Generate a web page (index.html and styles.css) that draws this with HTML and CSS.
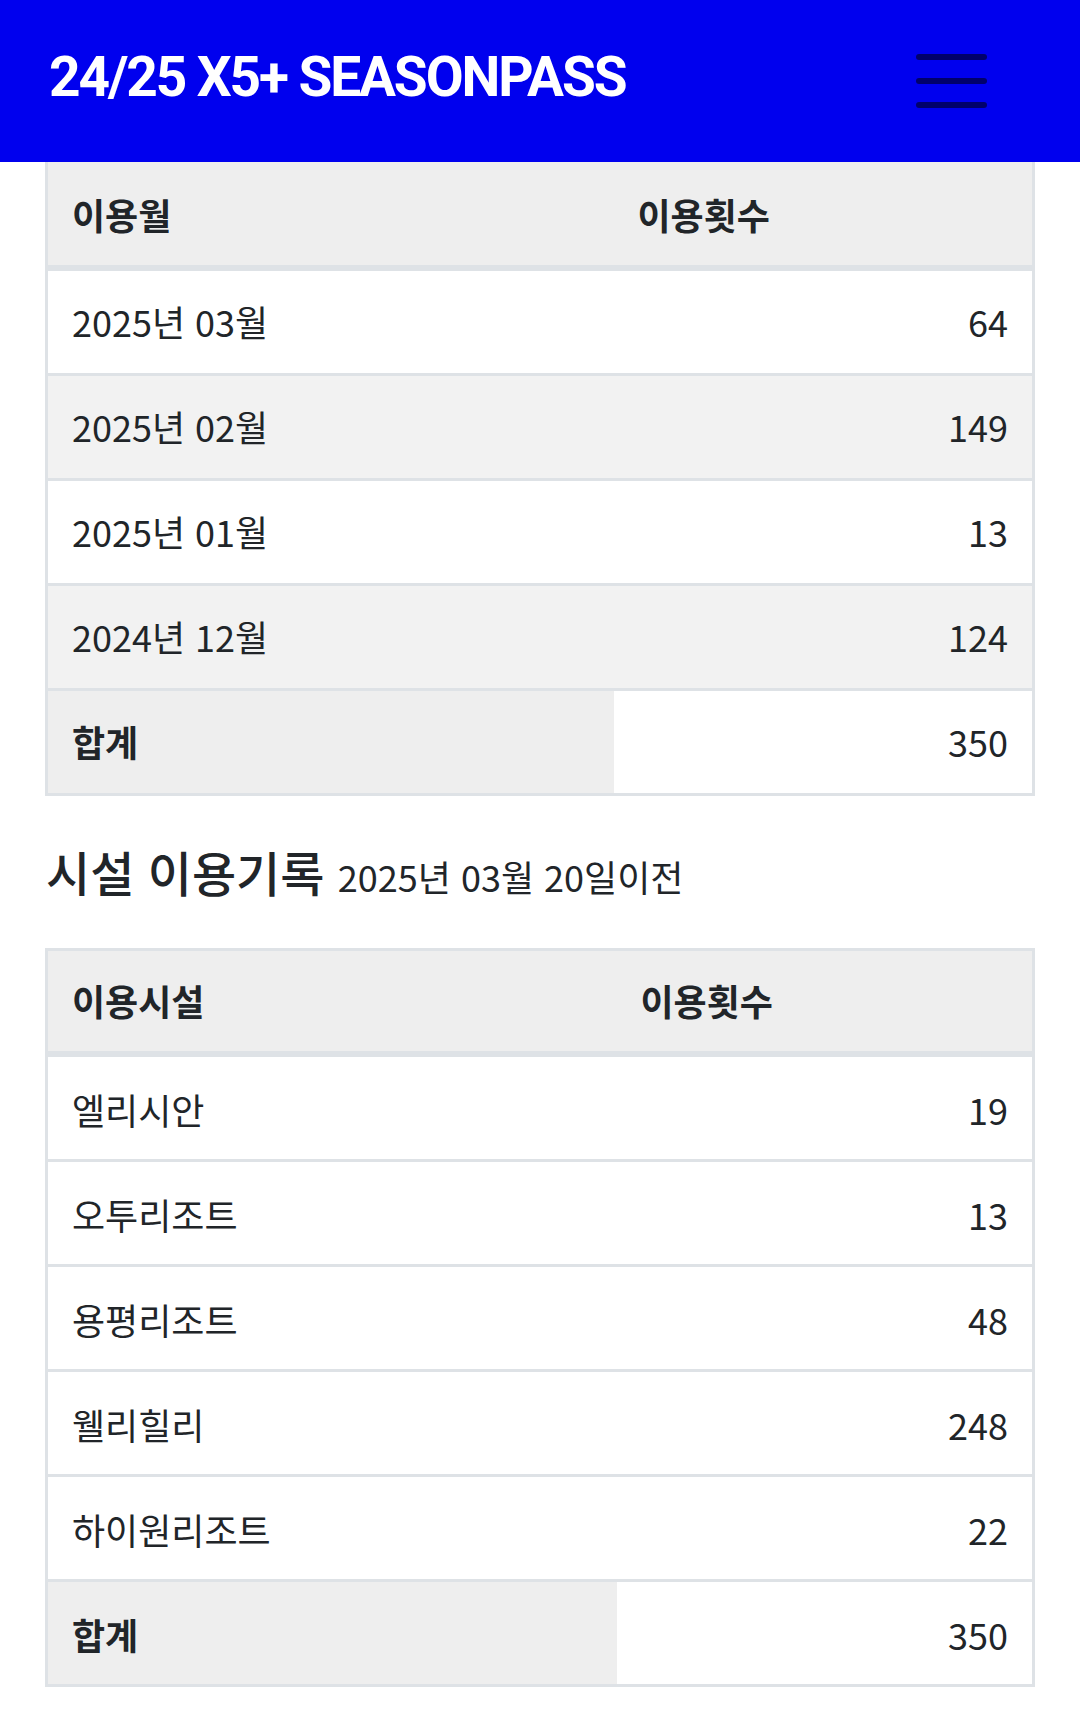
FILE: index.html
```html
<!DOCTYPE html>
<html lang="ko">
<head>
<meta charset="utf-8">
<title>24/25 X5+ SEASONPASS</title>
<link rel="stylesheet" href="styles.css">
</head>
<body>
<nav class="navbar">
  <span class="brand">24/25 X5+ SEASONPASS</span>
  <span class="toggler">
    <svg width="71" height="54" viewBox="0 0 71 54" aria-hidden="true">
      <g stroke="#00006b" stroke-width="6" stroke-linecap="round">
        <line x1="3" y1="3" x2="68" y2="3"/>
        <line x1="3" y1="27" x2="68" y2="27"/>
        <line x1="3" y1="51" x2="68" y2="51"/>
      </g>
    </svg>
  </span>
</nav>

<main class="content">
  <table class="usage first">
    <colgroup><col class="c1a"><col></colgroup>
    <thead>
      <tr><th>이용월</th><th>이용횟수</th></tr>
    </thead>
    <tbody>
      <tr><td>2025년 03월</td><td class="num">64</td></tr>
      <tr class="stripe"><td>2025년 02월</td><td class="num">149</td></tr>
      <tr><td>2025년 01월</td><td class="num">13</td></tr>
      <tr class="stripe"><td>2024년 12월</td><td class="num">124</td></tr>
      <tr class="total"><th>합계</th><td class="num">350</td></tr>
    </tbody>
  </table>

  <h2 class="section-title">시설 이용기록 <small>2025년 03월 20일이전</small></h2>

  <table class="usage second">
    <colgroup><col class="c1b"><col></colgroup>
    <thead>
      <tr><th>이용시설</th><th>이용횟수</th></tr>
    </thead>
    <tbody>
      <tr><td>엘리시안</td><td class="num">19</td></tr>
      <tr><td>오투리조트</td><td class="num">13</td></tr>
      <tr><td>용평리조트</td><td class="num">48</td></tr>
      <tr><td>웰리힐리</td><td class="num">248</td></tr>
      <tr><td>하이원리조트</td><td class="num">22</td></tr>
      <tr class="total"><th>합계</th><td class="num">350</td></tr>
    </tbody>
  </table>
</main>
</body>
</html>
```

FILE: styles.css
```css
html, body {
  margin: 0;
  padding: 0;
  background: #ffffff;
}

body {
  font-family: "Noto Sans CJK KR", "Noto Sans", sans-serif;
  color: #212529;
  font-size: 36px;
}

.navbar {
  height: 162px;
  background: #0000ee;
  display: flex;
  align-items: center;
  justify-content: space-between;
  padding: 0 93px 0 49px;
}

.brand {
  font-family: Roboto, "Liberation Sans", sans-serif;
  font-weight: 700;
  font-size: 55px;
  letter-spacing: -2.1px;
  color: #ffffff;
  margin-bottom: 8px;
  line-height: 1.172;
}

.toggler {
  display: flex;
}

.content {
  padding: 0 45px 40px;
}

.usage {
  width: 100%;
  border-collapse: collapse;
  table-layout: fixed;
  border-left: 3px solid #dee2e6;
  border-right: 3px solid #dee2e6;
}

.usage.second {
  border-top: 3px solid #dee2e6;
}

.c1a { width: 567px; }
.c1b { width: 570px; }

.usage th,
.usage td {
  padding: 25px 24px 27px;
  line-height: 50px;
  text-align: left;
  border-bottom: 3px solid #dee2e6;
  font-weight: 400;
}

.usage.second tbody th,
.usage.second tbody td {
  padding-top: 27px;
  padding-bottom: 25px;
}

.usage th {
  font-weight: 700;
}

.usage thead th {
  background: #eeeeee;
  border-bottom: 6px solid #dee2e6;
  padding-top: 27px;
  padding-bottom: 26px;
}

.usage.second thead th {
  padding-top: 24px;
  padding-bottom: 26px;
}

.usage .stripe td {
  background: #f2f2f2;
}

.usage .total th {
  background: #eeeeee;
}

.usage .num {
  text-align: right;
}

.section-title {
  margin: 48px 0 45px;
  padding-left: 1px;
  font-size: 48px;
  font-weight: 500;
  line-height: 54px;
  color: #212529;
}

.section-title small {
  font-size: 36px;
  font-weight: 400;
}
```
